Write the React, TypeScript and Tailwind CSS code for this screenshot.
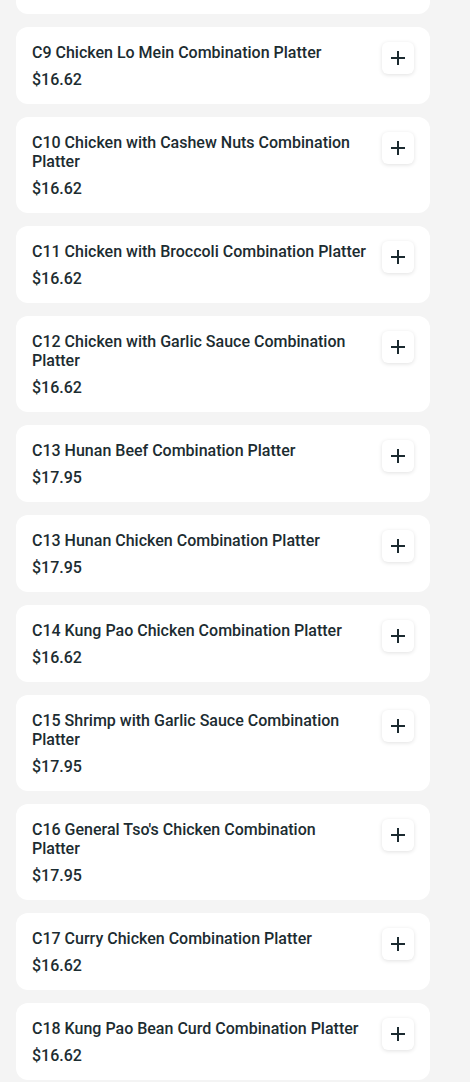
const items = [
  { name: 'C9 Chicken Lo Mein Combination Platter', price: '$16.62' },
  { name: 'C10 Chicken with Cashew Nuts Combination Platter', price: '$16.62' },
  { name: 'C11 Chicken with Broccoli Combination Platter', price: '$16.62' },
  { name: 'C12 Chicken with Garlic Sauce Combination Platter', price: '$16.62' },
  { name: 'C13 Hunan Beef Combination Platter', price: '$17.95' },
  { name: 'C13 Hunan Chicken Combination Platter', price: '$17.95' },
  { name: 'C14 Kung Pao Chicken Combination Platter', price: '$16.62' },
  { name: 'C15 Shrimp with Garlic Sauce Combination Platter', price: '$17.95' },
  { name: "C16 General Tso's Chicken Combination Platter", price: '$17.95' },
  { name: 'C17 Curry Chicken Combination Platter', price: '$16.62' },
  { name: 'C18 Kung Pao Bean Curd Combination Platter', price: '$16.62' },
]

function PlusIcon() {
  return (
    <svg width="18" height="18" viewBox="0 0 18 18" fill="none">
      <path d="M9 2v14M2 9h14" stroke="#1b2a30" strokeWidth="2" />
    </svg>
  )
}

export default function App() {
  return (
    <div
      className="min-h-screen bg-[#f4f4f4] overflow-hidden"
      style={{ fontFamily: 'Roboto, "Noto Sans", sans-serif' }}
    >
      <div className="flex flex-col gap-[13px] pl-4 w-[430px]">
        {/* tail of the previous card, scrolled off the top */}
        <div className="h-[14px] bg-white rounded-b-xl" />
        {items.map((item) => (
          <div
            key={item.name}
            className="bg-white rounded-xl pt-4 pb-[14px] px-4 flex items-start gap-4"
          >
            <div className="flex-1 min-w-0">
              <p className="text-base font-medium text-[#1c2c31] leading-[19px]">{item.name}</p>
              <p className="mt-2 text-base font-medium text-[#1c2c31] leading-[20px]">{item.price}</p>
            </div>
            <button className="shrink-0 -mt-px w-8 h-8 rounded-md bg-white flex items-center justify-center shadow-[0_1px_4px_rgba(0,0,0,0.12)]">
              <PlusIcon />
            </button>
          </div>
        ))}
      </div>
    </div>
  )
}
